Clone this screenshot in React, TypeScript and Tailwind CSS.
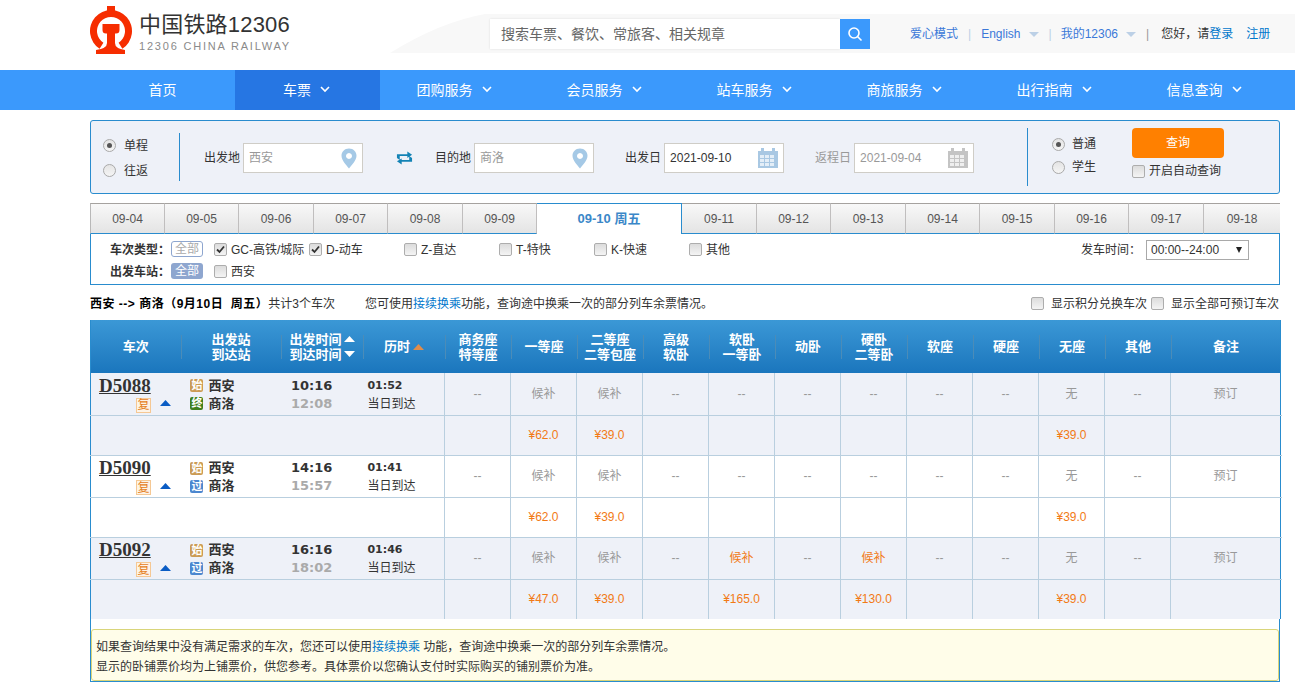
import React from "react";

const cjk = "font-['Liberation_Sans','Noto_Sans_CJK_SC',sans-serif]";

const Logo = () => (
  <svg width="44" height="54" viewBox="0 0 44 54" className="shrink-0">
    <path d="M9.6 43.7 A21 21 0 1 1 32.4 43.7 L28.6 37.8 A14 14 0 1 0 13.4 37.8 Z" fill="#f62d00" />
    <rect x="17" y="1" width="8" height="6" fill="#f62d00" />
    <path d="M12.5 19 H29.5 V25 Q29.5 28.5 26 28.5 H25 V38 Q25 43.5 35 45 V49 H6 V45 Q17 43.5 17 38 V28.5 H16 Q12.5 28.5 12.5 25 Z" fill="#f62d00" />
  </svg>
);

const Chevron = () => (
  <svg width="10" height="7" viewBox="0 0 10 7" className="ml-[9px] mt-[-2px]">
    <path d="M1 1 L5 5 L9 1" fill="none" stroke="#fff" strokeWidth="1.6" />
  </svg>
);

const NavItem = ({ label, width, active, chev = true }: { label: string; width: string; active?: boolean; chev?: boolean }) => (
  <div className={`${width} ${active ? "bg-[#2676e3]" : ""} ${chev ? "pr-[2px]" : ""} flex items-center justify-center text-[14px] text-white`}>
    {label}
    {chev && <Chevron />}
  </div>
);

const Radio = ({ on }: { on?: boolean }) => (
  <span className="relative inline-block h-[13px] w-[13px] shrink-0 rounded-full border border-[#a9a9a9] bg-gradient-to-b from-[#e4e4e4] to-[#f5f5f5]">
    {on && <span className="absolute left-[3px] top-[3px] h-[5px] w-[5px] rounded-full bg-[#555]" />}
  </span>
);

const Check = ({ on }: { on?: boolean }) => (
  <span className="relative inline-block h-[13px] w-[13px] shrink-0 rounded-[2px] border border-[#adadad] bg-gradient-to-b from-[#dcdcdc] to-[#f4f4f4]">
    {on && (
      <svg width="11" height="11" viewBox="0 0 11 11" className="absolute left-0 top-0">
        <path d="M2 5.5 L4.5 8 L9 2.5" fill="none" stroke="#333" strokeWidth="1.8" />
      </svg>
    )}
  </span>
);

const Pin = () => (
  <svg width="16" height="21" viewBox="0 0 16 21">
    <path fillRule="evenodd" d="M8 0.5 C3.5 0.5 0.5 3.8 0.5 7.8 C0.5 12.5 5.5 17.5 8 20.5 C10.5 17.5 15.5 12.5 15.5 7.8 C15.5 3.8 12.5 0.5 8 0.5 Z M8 5 A3 3 0 1 1 7.99 5 Z" fill="#a5c9e6" />
  </svg>
);

const Cal = ({ grey }: { grey?: boolean }) => {
  const c = grey ? "#c4c4c4" : "#a9c8e3";
  return (
    <svg width="20" height="20" viewBox="0 0 20 20">
      <rect x="0" y="3" width="20" height="17" fill={c} />
      <rect x="3" y="0" width="3" height="5" fill={c} />
      <rect x="14" y="0" width="3" height="5" fill={c} />
      {[7, 11, 15].flatMap((y) =>
        [2, 7, 12].map((x) => <rect key={`${x}-${y}`} x={x} y={y} width="4" height="3" fill={grey ? "#efefef" : "#e4eef7"} />)
      )}
    </svg>
  );
};

const Field = ({ label, value, w, icon, dark, labelGrey }: { label: string; value: string; w: string; icon: React.ReactNode; dark?: boolean; labelGrey?: boolean }) => (
  <div className="mt-[2px] flex items-center">
    <span className={`mr-[3px] ${labelGrey ? "text-[#999]" : "text-[#333]"}`}>{label}</span>
    <div className={`${w} flex h-[30px] items-center justify-between border border-[#cfcdc7] bg-white pl-[5px] pr-[5px] ${dark ? "text-[#333]" : "text-[#999]"}`}>
      <span>{value}</span>
      {icon}
    </div>
  </div>
);

const dates = [
  ["09-04", "w-[75px]"], ["09-05", "w-[74px]"], ["09-06", "w-[75px]"], ["09-07", "w-[74px]"], ["09-08", "w-[75px]"], ["09-09", "w-[74px]"],
];
const dates2 = [
  ["09-11", "w-[75px]"], ["09-12", "w-[74px]"], ["09-13", "w-[75px]"], ["09-14", "w-[74px]"], ["09-15", "w-[75px]"], ["09-16", "w-[74px]"], ["09-17", "w-[75px]"], ["09-18", "flex-1"],
];

const DateTab = ({ d, w }: { d: string; w: string }) => (
  <div className={`${w} flex items-center justify-center border-r border-t border-r-[#c0bebe] border-t-[#a5a29f] border-b border-b-[#298cce] bg-gradient-to-b from-[#f8f8f8] to-[#e4e4e4] text-[#555] last:border-r-0`}>{d}</div>
);

const TypeCheck = ({ label, on, w }: { label: string; on?: boolean; w?: string }) => (
  <div className={`flex items-center ${w ?? ""}`}>
    <Check on={on} />
    <span className="ml-[4px] text-[#333]">{label}</span>
  </div>
);

const heads = [
  ["车次"], ["出发站", "到达站"], ["出发时间", "到达时间"], ["历时"], ["商务座", "特等座"], ["一等座"], ["二等座", "二等包座"], ["高级", "软卧"], ["软卧", "一等卧"], ["动卧"], ["硬卧", "二等卧"], ["软座"], ["硬座"], ["无座"], ["其他"], ["备注"],
];

const headWidths = [90, 100, 82, 82, 66, 66, 66, 66, 66, 66, 66, 66, 66, 66, 66, 110];

const Tri = ({ up, c }: { up?: boolean; c: string }) => (
  <svg width="11" height="6" viewBox="0 0 11 6" className="block">
    <path d={up ? "M0 6 L5.5 0 L11 6 Z" : "M0 0 L5.5 6 L11 0 Z"} fill={c} />
  </svg>
);

const Badge = ({ t, c }: { t: string; c: string }) => (
  <span className={`mr-[5px] flex h-[13px] w-[13px] items-center justify-center rounded-[2px] text-[11px] leading-none text-white ${c}`}>{t}</span>
);

type Seat = { text: string; orange?: boolean };
const s = (text: string, orange?: boolean): Seat => ({ text, orange });

const Train = ({ no, mid, midC, t1, t2, dur, seats, prices, even, last }: { no: string; mid: string; midC: string; t1: string; t2: string; dur: string; seats: Seat[]; prices: Record<number, string>; even?: boolean; last?: boolean }) => {
  const bg = even ? "bg-white" : "bg-[#eef1f8]";
  const bottom = last ? "" : "border-b";
  return (
    <>
      <tr className={`h-[42px] ${bg}`}>
        <td colSpan={4} className="border-b border-[#b9cfdf] p-0">
          <div className="flex h-[40px] overflow-hidden">
            <div className="w-[91px] pl-[8px]">
              <div className="mt-[1px] font-['Liberation_Serif','DejaVu_Serif',serif] text-[19px] font-bold leading-[22px] text-[#333] underline">{no}</div>
              <div className="mt-[1px] flex items-center pl-[37px]">
                <span className="flex h-[15px] w-[15px] items-center justify-center border border-[#f5c894] bg-[#fdf3e6] text-[12px] leading-none text-[#e5801e]">复</span>
                <span className="ml-[9px] mt-[-4px]"><Tri up c="#0a5cc4" /></span>
              </div>
            </div>
            <div className="w-[100px] pl-[9px] pt-[3px] text-[13px] font-bold text-[#333]">
              <div className="flex h-[18px] items-center"><Badge t="始" c="bg-[#cb9b54]" />西安</div>
              <div className="flex h-[18px] items-center"><Badge t={mid} c={midC} />商洛</div>
            </div>
            <div className="w-[82px] pl-[10px] pt-[3px] font-['DejaVu_Sans',sans-serif] text-[13px] font-bold leading-[18px]">
              <div className="text-[#333]">{t1}</div>
              <div className="text-[#aaa]">{t2}</div>
            </div>
            <div className="w-[82px] pl-[5px] pt-[3px]">
              <div className="font-['DejaVu_Sans',sans-serif] text-[11px] font-bold leading-[18px] text-[#333]">{dur}</div>
              <div className="leading-[18px] text-[#333]">当日到达</div>
            </div>
          </div>
        </td>
        {seats.map((st, i) => (
          <td key={i} colSpan={i === seats.length - 1 ? 2 : 1} className={`border-b border-l border-[#b9cfdf] text-center ${st.orange ? "text-[#f27a16]" : "text-[#999]"}`}>{st.text}</td>
        ))}
      </tr>
      <tr className={`h-[40px] ${bg}`}>
        <td colSpan={4} className={`${bottom} border-[#b9cfdf] p-0`} />
        {seats.map((_, i) => (
          <td key={i} colSpan={i === seats.length - 1 ? 2 : 1} className={`${bottom} border-l border-[#b9cfdf] text-center text-[#f27a16]`}>{prices[i] ?? ""}</td>
        ))}
      </tr>
    </>
  );
};

const rowSeats = (a: Seat, b: Seat) => [s("--"), s("候补"), s("候补"), s("--"), a, s("--"), b, s("--"), s("--"), s("无"), s("--"), s("预订")];

export default function App() {
  return (
    <div className={`h-[691px] w-[1295px] overflow-hidden bg-white text-[12px] text-[#333] ${cjk}`}>
      <header className="relative h-[70px]">
        <svg width="905" height="40" viewBox="0 0 905 40" className="absolute left-[390px] top-[14px]">
          <path d="M0 39 Q50 8 95 0 H905 V39 Z" fill="#f8f8f8" />
        </svg>
        <div className="relative flex h-full w-[1190px] translate-x-[90px] items-start">
          <div className="mt-[5px] flex w-[400px]">
            <Logo />
            <div className="ml-[5px]">
              <div className="mt-[5px] text-[22px] leading-[30px] tracking-[0.2px] text-[#333]">中国铁路12306</div>
              <div className="text-[11px] leading-[12px] tracking-[1.8px] text-[#8a8a8a]">12306 CHINA RAILWAY</div>
            </div>
          </div>
          <div className="mt-[19px] flex h-[30px] w-[380px]">
            <div className="flex w-[350px] items-center bg-white pl-[11px] text-[14px] text-[#666] shadow-[0_0_2px_#ddd]">搜索车票、餐饮、常旅客、相关规章</div>
            <div className="flex w-[30px] items-center justify-center bg-[#3b99fc]">
              <svg width="16" height="16" viewBox="0 0 16 16">
                <circle cx="7" cy="7" r="5" fill="none" stroke="#fff" strokeWidth="1.6" />
                <path d="M10.5 10.5 L14.5 14.5" stroke="#fff" strokeWidth="1.6" />
              </svg>
            </div>
          </div>
          <div className="ml-[40px] mt-[27px] flex h-[14px] items-center whitespace-nowrap leading-[14px] text-[#3b78d8]">
            <span>爱心模式</span>
            <span className="mx-[10px] text-[#bcd0e6]">|</span>
            <span>English</span>
            <span className="ml-[8px] h-0 w-0 border-x-[5px] border-t-[5px] border-x-transparent border-t-[#bcd0e6]" />
            <span className="ml-[10px] mr-[9px] text-[#bcd0e6]">|</span>
            <span>我的12306</span>
            <span className="ml-[8px] h-0 w-0 border-x-[5px] border-t-[5px] border-x-transparent border-t-[#bcd0e6]" />
            <span className="ml-[10px] mr-[12px] text-[#999]">|</span>
            <span className="text-[#333]">您好，请</span>
            <span className="text-[#0077cc]">登录</span>
            <span className="ml-[13px] text-[#0077cc]">注册</span>
          </div>
        </div>
      </header>

      <nav className="flex h-[40px] bg-[#3b99fc] pl-[90px]">
        <NavItem label="首页" width="w-[145px]" chev={false} />
        <NavItem label="车票" width="w-[145px]" active />
        <NavItem label="团购服务" width="w-[150px]" />
        <NavItem label="会员服务" width="w-[150px]" />
        <NavItem label="站车服务" width="w-[150px]" />
        <NavItem label="商旅服务" width="w-[150px]" />
        <NavItem label="出行指南" width="w-[150px]" />
        <NavItem label="信息查询" width="w-[150px]" />
      </nav>

      <main className="ml-[90px] w-[1190px]">
        <section className="mt-[10px] flex h-[74px] items-center rounded-[3px] border border-[#298cce] bg-[#eef1f8]">
          <div className="flex h-[48px] w-[89px] flex-col justify-center gap-[9px] border-r border-[#298cce] pl-[12px] pt-[2px] leading-[16px] text-[#333]">
            <label className="flex items-center gap-[8px]"><Radio on />单程</label>
            <label className="flex items-center gap-[8px]"><Radio />往返</label>
          </div>
          <div className="ml-[24px]"><Field label="出发地" value="西安" w="w-[120px]" icon={<Pin />} /></div>
          <svg width="17" height="14" viewBox="0 0 18 14" className="ml-[33px] mr-[22px] mt-[2px]">
            <path d="M12 0 L17 3.5 L12 7 V5 H4 V9 L1 7 V3 H12 Z M6 14 L1 10.5 L6 7.5 V9 H14 V5 L17 7 V11 H6 Z" fill="#1383b5" />
          </svg>
          <Field label="目的地" value="商洛" w="w-[120px]" icon={<Pin />} />
          <div className="ml-[31px]"><Field label="出发日" value="2021-09-10" w="w-[120px]" dark icon={<Cal />} /></div>
          <div className="ml-[31px]"><Field label="返程日" value="2021-09-04" w="w-[120px]" labelGrey icon={<Cal grey />} /></div>
          <div className="ml-[53px] flex h-[58px] w-[105px] flex-col justify-center gap-[9px] border-l border-[#298cce] pb-[3px] pl-[24px] leading-[14px] text-[#333]">
            <label className="flex items-center gap-[7px]"><Radio on />普通</label>
            <label className="flex items-center gap-[7px]"><Radio />学生</label>
          </div>
          <div className="mb-[6px] flex flex-col">
            <div className="flex h-[30px] w-[92px] items-center justify-center rounded-[4px] bg-[#ff8000] text-white">查询</div>
            <label className="mt-[4px] flex items-center gap-[4px] leading-[18px] text-[#333]"><Check />开启自动查询</label>
          </div>
        </section>

        <div className="mt-[9px] flex h-[31px]">
          {dates.map(([d, w], i) => (
            <div key={d} className={`${w} flex items-center justify-center border-b border-r border-t border-b-[#298cce] border-r-[#c0bebe] border-t-[#a5a29f] bg-gradient-to-b from-[#f8f8f8] to-[#e4e4e4] text-[#555] ${i === 0 ? "border-l border-l-[#b8b8b8]" : ""}`}>{d}</div>
          ))}
          <div className="flex w-[145px] items-center justify-center border-r border-t border-[#298cce] bg-white text-[13px] font-bold text-[#3a87c8]">09-10 周五</div>
          {dates2.map(([d, w]) => <DateTab key={d} d={d} w={w} />)}
        </div>
        <section className="flex h-[51px] justify-between border-x border-b border-[#298cce] pl-[19px] pr-[30px] pt-[6px]">
          <div className="flex flex-col gap-[3px]">
            <div className="flex h-[19px] items-center">
              <b className="w-[61px] whitespace-nowrap text-[#333]">车次类型：</b>
              <span className="mb-[2px] mr-[11px] flex h-[16px] w-[32px] items-center justify-center rounded-[3px] border border-[#8ea6cf] text-[#aaa]">全部</span>
              <TypeCheck label="GC-高铁/城际" on w="w-[95px]" />
              <TypeCheck label="D-动车" on w="w-[95px]" />
              <TypeCheck label="Z-直达" w="w-[95px]" />
              <TypeCheck label="T-特快" w="w-[95px]" />
              <TypeCheck label="K-快速" w="w-[95px]" />
              <TypeCheck label="其他" />
            </div>
            <div className="flex h-[19px] items-center">
              <b className="w-[61px] whitespace-nowrap text-[#333]">出发车站：</b>
              <span className="mb-[2px] mr-[11px] flex h-[16px] w-[32px] items-center justify-center rounded-[3px] bg-[#8ea6cf] text-white">全部</span>
              <TypeCheck label="西安" />
            </div>
          </div>
          <div className="flex h-[19px] items-center">
            <span className="mr-[5px] text-[#333]">发车时间：</span>
            <div className="flex h-[20px] w-[103px] items-center justify-between border border-[#a9a9a9] pl-[4px] pr-[6px] text-[#333]">
              <span>00:00--24:00</span>
              <span className="h-0 w-0 border-x-[3px] border-t-[6px] border-x-transparent border-t-[#222]" />
            </div>
          </div>
        </section>

        <div className="flex h-[35px] items-center whitespace-nowrap pt-[2px] text-[#333]">
          <b className="tracking-[0.5px] text-black">西安 --&gt; 商洛（9月10日&nbsp; 周五）</b>
          <span>共计3个车次</span>
          <span className="ml-[30px]">您可使用<a className="text-[#0077cc]">接续换乘</a>功能，查询途中换乘一次的部分列车余票情况。</span>
          <span className="ml-auto flex items-center"><Check /><span className="ml-[7px]">显示积分兑换车次</span></span>
          <span className="ml-[4px] mr-[1px] flex items-center"><Check /><span className="ml-[7px]">显示全部可预订车次</span></span>
        </div>

        <table className="w-[1190px] table-fixed border-collapse border-x border-[#298cce]">
          <colgroup>
            {headWidths.map((w, i) => <col key={i} style={{ width: w }} />)}
          </colgroup>
          <thead>
            <tr className="h-[53px] bg-gradient-to-b from-[#3b98d6] to-[#1a76bd] text-[13px] leading-[15px] text-white">
              {heads.map((lines, i) => (
                <th key={i} className="p-0 font-bold">
                  <div className={`flex h-[24px] items-center justify-center ${i > 0 ? "border-l border-[#4b8cb8]" : ""}`}>
                    <div>{lines.map((l) => <div key={l}>{l}</div>)}</div>
                    {i === 2 && <div className="ml-[2px] flex flex-col gap-[9px]"><Tri up c="#fff" /><Tri c="#fff" /></div>}
                    {i === 3 && <div className="ml-[3px]"><Tri up c="#e08c4a" /></div>}
                  </div>
                </th>
              ))}
            </tr>
          </thead>
          <tbody>
            <Train no="D5088" mid="终" midC="bg-[#3f7f1e]" t1="10:16" t2="12:08" dur="01:52" seats={rowSeats(s("--"), s("--"))} prices={{ 1: "¥62.0", 2: "¥39.0", 9: "¥39.0" }} />
            <Train even no="D5090" mid="过" midC="bg-[#4b87cf]" t1="14:16" t2="15:57" dur="01:41" seats={rowSeats(s("--"), s("--"))} prices={{ 1: "¥62.0", 2: "¥39.0", 9: "¥39.0" }} />
            <Train last no="D5092" mid="过" midC="bg-[#4b87cf]" t1="16:16" t2="18:02" dur="01:46" seats={rowSeats(s("候补", true), s("候补", true))} prices={{ 1: "¥47.0", 2: "¥39.0", 4: "¥165.0", 6: "¥130.0", 9: "¥39.0" }} />
          </tbody>
        </table>

        <div className="border-x border-b border-[#298cce] pb-[0px] pt-[10px]">
          <div className="h-[52px] rounded-[3px] border border-[#d9d57a] bg-[#fffde9] pl-[4px] pt-[7px] leading-[20px] text-[#333]">
            <div>如果查询结果中没有满足需求的车次，您还可以使用<a className="text-[#0077cc]">接续换乘</a> 功能，查询途中换乘一次的部分列车余票情况。</div>
            <div>显示的卧铺票价均为上铺票价，供您参考。具体票价以您确认支付时实际购买的铺别票价为准。</div>
          </div>
        </div>
      </main>
    </div>
  );
}
